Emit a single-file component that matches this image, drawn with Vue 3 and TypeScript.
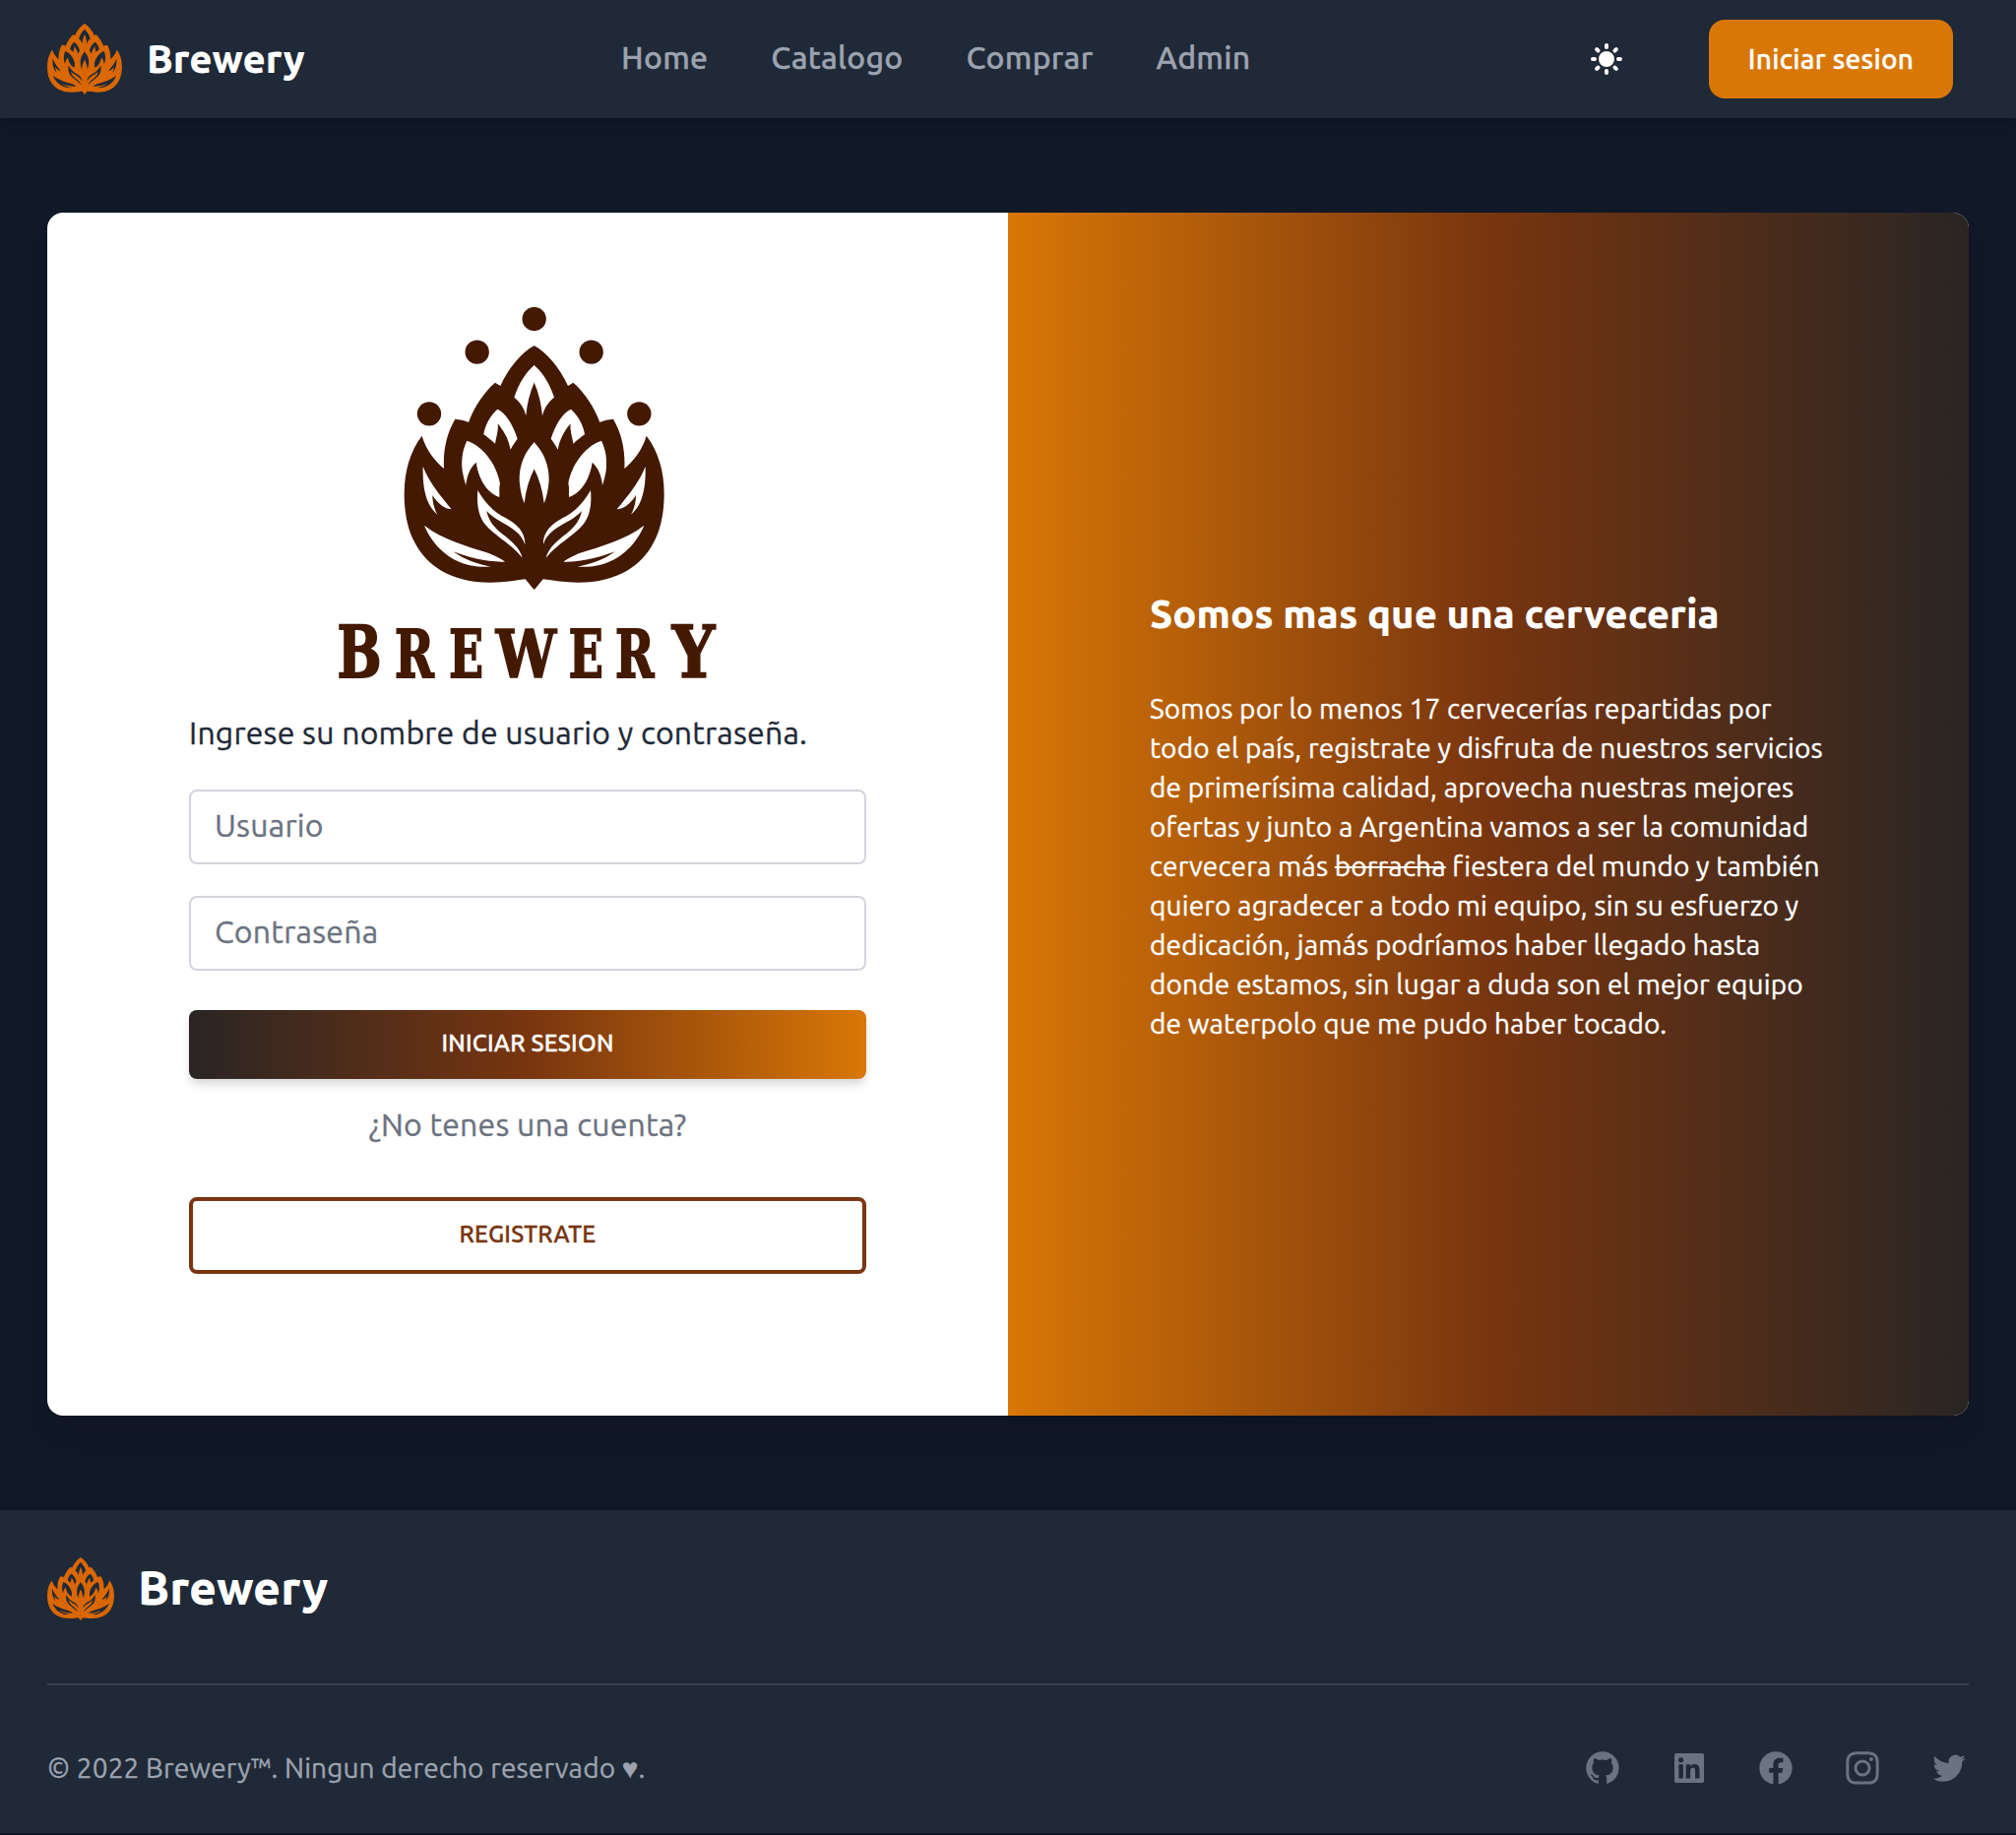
<script setup lang="ts">
import { ref } from 'vue'

interface Letter {
  char: string
  x: number
  width: number
  height: number
  /** glyph ink box, in units of 1/200 em */
  left: number
  ink: number
}

const year = 2022
const user = ref('')
const password = ref('')

const links: string[] = ['Home', 'Catalogo', 'Comprar', 'Admin']

const bubbles: [number, number][] = [[458, 102], [284, 203], [632, 203], [138, 391], [778, 391]]

const hop = {
  outline:
    'M458 183C420 205 380 250 355 306L339 296C305 325 275 370 258 417C246 411 230 408 217 407C192 450 180 500 183 558C155 535 128 500 116 458C80 505 62 565 62 635C62 690 72 745 95 785C130 850 200 905 325 905C365 905 400 899 431 895L458 928Z',
  leaves: [
    'M459 242C435 262 412 295 397 341C415 355 428 375 433 397C436 360 445 325 459 293Z',
    'M346 377C325 395 308 425 304 454C315 462 328 472 339 482C342 460 350 442 347 421C368 445 380 470 386 500C392 488 400 476 407 467C395 430 375 390 346 377Z',
    'M253 473C240 500 235 530 239 565C242 582 246 597 250 609C253 580 262 556 281 539C288 585 310 630 352 645C353 630 350 618 354 603C345 550 305 490 253 473Z',
    'M459 477C428 508 412 550 413 595C415 622 420 645 428 664C432 625 442 590 459 557Z',
    'M119 551C118 600 122 665 163 698C153 680 148 660 148 639C162 662 182 680 206 682C180 650 137 600 119 551Z',
    'M286 624C283 660 285 700 310 730C340 765 385 785 422 830C415 800 385 775 360 757C330 732 318 712 313 687C345 725 415 735 430 790C432 745 395 720 360 703C330 686 303 655 286 624Z',
    'M123 731C145 785 190 830 245 848C275 858 305 858 326 857C285 850 245 835 211 811C260 829 310 843 369 842C350 828 335 822 318 815C255 795 180 775 123 731Z',
  ],
}

const letters: Letter[] = [
  { char: 'B', x: -138, width: 125, height: 164, left: 8, ink: 135 },
  { char: 'R', x: 37, width: 119, height: 151, left: 8, ink: 143 },
  { char: 'E', x: 202, width: 96, height: 151, left: 8, ink: 120 },
  { char: 'W', x: 337, width: 193, height: 151, left: -2, ink: 207 },
  { char: 'E', x: 567, width: 97, height: 151, left: 8, ink: 120 },
  { char: 'R', x: 709, width: 118, height: 151, left: 8, ink: 143 },
  { char: 'Y', x: 874, width: 140, height: 164, left: -2, ink: 133 },
]

const OUTLINE = 5

function letterAttrs(l: Letter) {
  const size = (l.height - OUTLINE) / 0.73
  const scale = (l.width - OUTLINE) / ((l.ink * size) / 200)
  return {
    transform: `translate(${l.x + OUTLINE / 2} ${1196 - OUTLINE / 2}) scale(${scale.toFixed(4)} 1)`,
    x: (-l.left * size) / 200,
    'font-size': size,
    'stroke-width': OUTLINE / 3,
  }
}

const socials: { name: string; path: string }[] = [
  {
    name: 'GitHub',
    path: 'M12 2C6.477 2 2 6.484 2 12.017c0 4.425 2.865 8.18 6.839 9.504.5.092.682-.217.682-.483 0-.237-.008-.868-.013-1.703-2.782.605-3.369-1.343-3.369-1.343-.454-1.158-1.11-1.466-1.11-1.466-.908-.62.069-.608.069-.608 1.003.07 1.531 1.032 1.531 1.032.892 1.53 2.341 1.088 2.91.832.092-.647.35-1.088.636-1.338-2.22-.253-4.555-1.113-4.555-4.951 0-1.093.39-1.988 1.029-2.688-.103-.253-.446-1.272.098-2.65 0 0 .84-.27 2.75 1.026A9.564 9.564 0 0112 6.844c.85.004 1.705.115 2.504.337 1.909-1.296 2.747-1.027 2.747-1.027.546 1.379.202 2.398.1 2.651.64.7 1.028 1.595 1.028 2.688 0 3.848-2.339 4.695-4.566 4.943.359.309.678.92.678 1.855 0 1.338-.012 2.419-.012 2.747 0 .268.18.58.688.482A10.019 10.019 0 0022 12.017C22 6.484 17.522 2 12 2z',
  },
  {
    name: 'LinkedIn',
    path: 'M20 3H4a1 1 0 0 0-1 1v16a1 1 0 0 0 1 1h16a1 1 0 0 0 1-1V4a1 1 0 0 0-1-1zM8.339 18.337H5.667v-8.59h2.672v8.59zM7.003 8.574a1.548 1.548 0 1 1 0-3.096 1.548 1.548 0 0 1 0 3.096zm11.335 9.763h-2.669V14.16c0-.996-.018-2.277-1.388-2.277-1.39 0-1.601 1.086-1.601 2.207v4.248h-2.667v-8.59h2.56v1.174h.037c.355-.675 1.227-1.387 2.524-1.387 2.704 0 3.203 1.778 3.203 4.092v4.71z',
  },
  {
    name: 'Facebook',
    path: 'M22 12c0-5.523-4.477-10-10-10S2 6.477 2 12c0 4.991 3.657 9.128 8.438 9.878v-6.987h-2.54V12h2.54V9.797c0-2.506 1.492-3.89 3.777-3.89 1.094 0 2.238.195 2.238.195v2.46h-1.26c-1.243 0-1.63.771-1.63 1.562V12h2.773l-.443 2.89h-2.33v6.988C18.343 21.128 22 16.991 22 12z',
  },
  {
    name: 'Instagram',
    path: 'M12.315 2c2.43 0 2.784.013 3.808.06 1.064.049 1.791.218 2.427.465a4.902 4.902 0 011.772 1.153 4.902 4.902 0 011.153 1.772c.247.636.416 1.363.465 2.427.048 1.067.06 1.407.06 4.123v.08c0 2.643-.012 2.987-.06 4.043-.049 1.064-.218 1.791-.465 2.427a4.902 4.902 0 01-1.153 1.772 4.902 4.902 0 01-1.772 1.153c-.636.247-1.363.416-2.427.465-1.067.048-1.407.06-4.123.06h-.08c-2.643 0-2.987-.012-4.043-.06-1.064-.049-1.791-.218-2.427-.465a4.902 4.902 0 01-1.772-1.153 4.902 4.902 0 01-1.153-1.772c-.247-.636-.416-1.363-.465-2.427-.047-1.024-.06-1.379-.06-3.808v-.63c0-2.43.013-2.784.06-3.808.049-1.064.218-1.791.465-2.427a4.902 4.902 0 011.153-1.772A4.902 4.902 0 015.45 2.525c.636-.247 1.363-.416 2.427-.465C8.901 2.013 9.256 2 11.685 2h.63zm-.081 1.802h-.468c-2.456 0-2.784.011-3.807.058-.975.045-1.504.207-1.857.344-.467.182-.8.398-1.15.748-.35.35-.566.683-.748 1.15-.137.353-.3.882-.344 1.857-.047 1.023-.058 1.351-.058 3.807v.468c0 2.456.011 2.784.058 3.807.045.975.207 1.504.344 1.857.182.466.399.8.748 1.15.35.35.683.566 1.15.748.353.137.882.3 1.857.344 1.054.048 1.37.058 4.041.058h.08c2.597 0 2.917-.01 3.96-.058.976-.045 1.505-.207 1.858-.344.466-.182.8-.398 1.15-.748.35-.35.566-.683.748-1.15.137-.353.3-.882.344-1.857.048-1.055.058-1.37.058-4.041v-.08c0-2.597-.01-2.917-.058-3.96-.045-.976-.207-1.505-.344-1.858a3.097 3.097 0 00-.748-1.15 3.098 3.098 0 00-1.15-.748c-.353-.137-.882-.3-1.857-.344-1.023-.047-1.351-.058-3.807-.058zM12 6.865a5.135 5.135 0 110 10.27 5.135 5.135 0 010-10.27zm0 1.802a3.333 3.333 0 100 6.666 3.333 3.333 0 000-6.666zm5.338-3.205a1.2 1.2 0 110 2.4 1.2 1.2 0 010-2.4z',
  },
  {
    name: 'Twitter',
    path: 'M8.29 20.251c7.547 0 11.675-6.253 11.675-11.675 0-.178 0-.355-.012-.53A8.348 8.348 0 0022 5.92a8.19 8.19 0 01-2.357.646 4.118 4.118 0 001.804-2.27 8.224 8.224 0 01-2.605.996 4.107 4.107 0 00-6.993 3.743 11.65 11.65 0 01-8.457-4.287 4.106 4.106 0 001.27 5.477A4.072 4.072 0 012.8 9.713v.052a4.105 4.105 0 003.292 4.022 4.095 4.095 0 01-1.853.07 4.108 4.108 0 003.834 2.85A8.233 8.233 0 012 18.407a11.616 11.616 0 006.29 1.84',
  },
]
</script>

<template>
  <svg class="defs" aria-hidden="true">
    <defs>
      <mask id="hop-mask" maskUnits="userSpaceOnUse" x="50" y="170" width="816" height="770">
        <rect x="50" y="170" width="816" height="770" fill="#fff" />
        <path v-for="(d, i) in hop.leaves" :key="i" :d="d" fill="#000" />
        <g transform="matrix(-1 0 0 1 916 0)">
          <path v-for="(d, i) in hop.leaves" :key="i" :d="d" fill="#000" />
        </g>
      </mask>
      <g id="hop">
        <g mask="url(#hop-mask)">
          <path :d="hop.outline" />
          <path :d="hop.outline" transform="matrix(-1 0 0 1 916 0)" />
          <rect x="455" y="187" width="6" height="735" />
        </g>
      </g>
    </defs>
  </svg>

  <div class="page">
    <header class="navbar">
      <a class="brand">
        <svg class="brand-mark" viewBox="62 183 793 745" preserveAspectRatio="none"><use href="#hop" /></svg>
        <span class="brand-name">Brewery</span>
      </a>
      <nav class="links">
        <a v-for="link in links" :key="link">{{ link }}</a>
      </nav>
      <div class="actions">
        <svg class="sun" viewBox="0 0 20 20" fill="currentColor">
          <path
            fill-rule="evenodd"
            d="M10 2a1 1 0 011 1v1a1 1 0 11-2 0V3a1 1 0 011-1zm4 8a4 4 0 11-8 0 4 4 0 018 0zm-.464 4.95l.707.707a1 1 0 001.414-1.414l-.707-.707a1 1 0 00-1.414 1.414zm2.12-10.607a1 1 0 010 1.414l-.706.707a1 1 0 11-1.414-1.414l.707-.707a1 1 0 011.414 0zM17 11a1 1 0 100-2h-1a1 1 0 100 2h1zm-7 4a1 1 0 011 1v1a1 1 0 11-2 0v-1a1 1 0 011-1zM5.05 6.464A1 1 0 106.465 5.05l-.708-.707a1 1 0 00-1.414 1.414l.707.707zm1.414 8.486l-.707.707a1 1 0 01-1.414-1.414l.707-.707a1 1 0 011.414 1.414zM4 11a1 1 0 100-2H3a1 1 0 000 2h1z"
            clip-rule="evenodd"
          />
        </svg>
        <button class="login">Iniciar sesion</button>
      </div>
    </header>

    <main class="main">
      <section class="card">
        <form class="form" @submit.prevent>
          <svg class="logo" viewBox="-594 66 2064 1224">
            <circle v-for="([cx, cy], i) in bubbles" :key="i" :cx="cx" :cy="cy" r="36.5" />
            <use href="#hop" />
            <text v-for="(l, i) in letters" :key="i" class="letter" v-bind="letterAttrs(l)">{{ l.char }}</text>
          </svg>
          <p class="hint">Ingrese su nombre de usuario y contraseña.</p>
          <input v-model="user" class="field" type="text" placeholder="Usuario" />
          <input v-model="password" class="field" type="password" placeholder="Contraseña" />
          <button class="submit">Iniciar sesion</button>
          <a class="question">¿No tenes una cuenta?</a>
          <button class="register" type="button">Registrate</button>
        </form>
        <div class="about">
          <h4>Somos mas que una cerveceria</h4>
          <p>
            Somos por lo menos 17 cervecerías repartidas por<br />
            todo el país, registrate y disfruta de nuestros servicios<br />
            de primerísima calidad, aprovecha nuestras mejores<br />
            ofertas y junto a Argentina vamos a ser la comunidad<br />
            cervecera más <s>borracha</s> fiestera del mundo y también<br />
            quiero agradecer a todo mi equipo, sin su esfuerzo y<br />
            dedicación, jamás podríamos haber llegado hasta<br />
            donde estamos, sin lugar a duda son el mejor equipo<br />
            de waterpolo que me pudo haber tocado.
          </p>
        </div>
      </section>
    </main>

    <footer class="footer">
      <a class="footer-brand">
        <svg class="footer-mark" viewBox="62 183 793 745" preserveAspectRatio="none"><use href="#hop" /></svg>
        <span>Brewery</span>
      </a>
      <hr />
      <div class="footer-row">
        <span class="copyright">© {{ year }} Brewery™. Ningun derecho reservado ♥.</span>
        <div class="socials">
          <svg v-for="s in socials" :key="s.name" viewBox="0 0 24 24" fill="currentColor" :aria-label="s.name">
            <path fill-rule="evenodd" clip-rule="evenodd" :d="s.path" />
          </svg>
        </div>
      </div>
    </footer>
  </div>
</template>

<style>
body {
  background: #111827;
}
</style>

<style scoped>
.defs {
  position: absolute;
  width: 0;
  height: 0;
}
.page,
button,
input {
  font-family: Ubuntu, 'Noto Sans', sans-serif;
  -webkit-text-stroke: 0.35px currentColor;
}
.page {
  display: flex;
  flex-direction: column;
  width: 2048px;
  height: 1864px;
  overflow: hidden;
  background: #111827;
  letter-spacing: 0.2px;
}
button {
  border: 0;
  cursor: pointer;
}
.navbar {
  box-sizing: border-box;
  display: flex;
  align-items: center;
  height: 120px;
  flex: none;
  padding: 0 64px 0 48px;
  background: #1f2937;
  box-shadow: 0 8px 12px -2px rgba(0, 0, 0, 0.1), 0 4px 8px -4px rgba(0, 0, 0, 0.1);
}
.brand {
  display: flex;
  align-items: center;
  gap: 24px;
  width: 583px;
}
.brand-mark {
  width: 76px;
  height: 72px;
  fill: #d96704;
}
.brand-name {
  margin-left: 1px;
  color: #fff;
  font-size: 40px;
  font-weight: 800;
  line-height: 56px;
  letter-spacing: -0.05px;
  -webkit-text-stroke: 0;
}
.links {
  display: flex;
  gap: 64px;
  margin-top: -4px;
  color: #9ca3af;
  font-size: 32px;
  font-weight: 500;
  line-height: 48px;
  letter-spacing: 0.26px;
}
.actions {
  display: flex;
  align-items: center;
  gap: 84px;
  margin-left: auto;
}
.sun {
  width: 40px;
  height: 40px;
  color: #fff;
}
.login {
  width: 248px;
  height: 80px;
  padding: 0 0 2px;
  border-radius: 16px;
  background: #d97706;
  color: #fff;
  font-size: 28px;
  font-weight: 500;
  letter-spacing: 0.25px;
}
.main {
  flex: none;
  padding: 96px 48px;
}
.card {
  display: flex;
  height: 1222px;
  overflow: hidden;
  border-radius: 16px;
  background: #fff;
  box-shadow: 0 20px 30px -6px rgba(0, 0, 0, 0.1), 0 8px 12px -8px rgba(0, 0, 0, 0.1);
}
.form,
.about {
  box-sizing: border-box;
  width: 50%;
  padding: 0 144px;
}
.form {
  display: flex;
  flex-direction: column;
  padding-top: 96px;
}
.logo {
  flex: none;
  width: 688px;
  height: 408px;
  fill: #431902;
}
.letter {
  font-family: 'DejaVu Serif Condensed', 'DejaVu Serif', serif;
  font-weight: 700;
  letter-spacing: 0;
  stroke: #431902;
  vector-effect: non-scaling-stroke;
}
.hint {
  margin: 0 0 34px;
  color: #1f2937;
  font-size: 32px;
  line-height: 48px;
}
.field {
  box-sizing: border-box;
  height: 76px;
  margin: 0 0 32px;
  padding: 10px 24px 14px;
  border: 2px solid #d1d5db;
  border-radius: 8px;
  outline: 0;
  background: #fff;
  color: #374151;
  font-size: 32px;
  line-height: 48px;
  letter-spacing: 0.25px;
}
.field::placeholder {
  color: #6b7280;
  opacity: 1;
  -webkit-text-stroke: 0.35px #6b7280;
}
.submit,
.register {
  border-radius: 8px;
  font-size: 24px;
  font-weight: 500;
  letter-spacing: 0.22px;
  line-height: 36px;
  text-transform: uppercase;
}
.submit {
  height: 70px;
  margin-top: 8px;
  padding: 0 0 3px;
  background: linear-gradient(to right, #292524, #78350f, #d97706);
  color: #fff;
  box-shadow: 0 8px 12px -2px rgba(0, 0, 0, 0.1), 0 4px 8px -2px rgba(0, 0, 0, 0.1);
}
.question {
  margin: 22px 0 50px;
  color: #6b7280;
  font-size: 32px;
  line-height: 48px;
  text-align: center;
}
.register {
  height: 78px;
  padding: 0 0 3px;
  border: 4px solid #78350f;
  background: #fff;
  color: #78350f;
}
.about {
  display: flex;
  flex-direction: column;
  justify-content: center;
  padding-top: 2px;
  background: linear-gradient(to right, #d97706, #78350f, #292524);
  color: #fff;
}
.about h4 {
  margin: 0 0 48px;
  font-size: 40px;
  font-weight: 800;
  line-height: 56px;
  letter-spacing: 0;
  -webkit-text-stroke: 0;
}
.about p {
  margin: 0;
  font-size: 28px;
  line-height: 40px;
  letter-spacing: 0.155px;
  white-space: nowrap;
}
.footer {
  box-sizing: border-box;
  flex: none;
  height: 328px;
  padding: 48px;
  background: #1f2937;
}
.footer-brand {
  display: flex;
  align-items: center;
  gap: 24px;
  height: 64px;
  color: #fff;
  font-size: 48px;
  font-weight: 800;
  letter-spacing: 0;
  -webkit-text-stroke: 0;
}
.footer-brand span {
  line-height: 60px;
  margin-top: -4px;
}
.footer-mark {
  width: 68px;
  height: 64px;
  fill: #d96704;
}
.footer hr {
  height: 2px;
  margin: 64px 0;
  border: 0;
  background: #374151;
}
.footer-row {
  display: flex;
  align-items: center;
  justify-content: space-between;
  height: 40px;
}
.copyright {
  color: #9ca3af;
  font-size: 28px;
  line-height: 40px;
  letter-spacing: 0.15px;
}
.socials {
  display: flex;
  gap: 48px;
  color: #6b7280;
}
.socials svg {
  width: 40px;
  height: 40px;
}
</style>
